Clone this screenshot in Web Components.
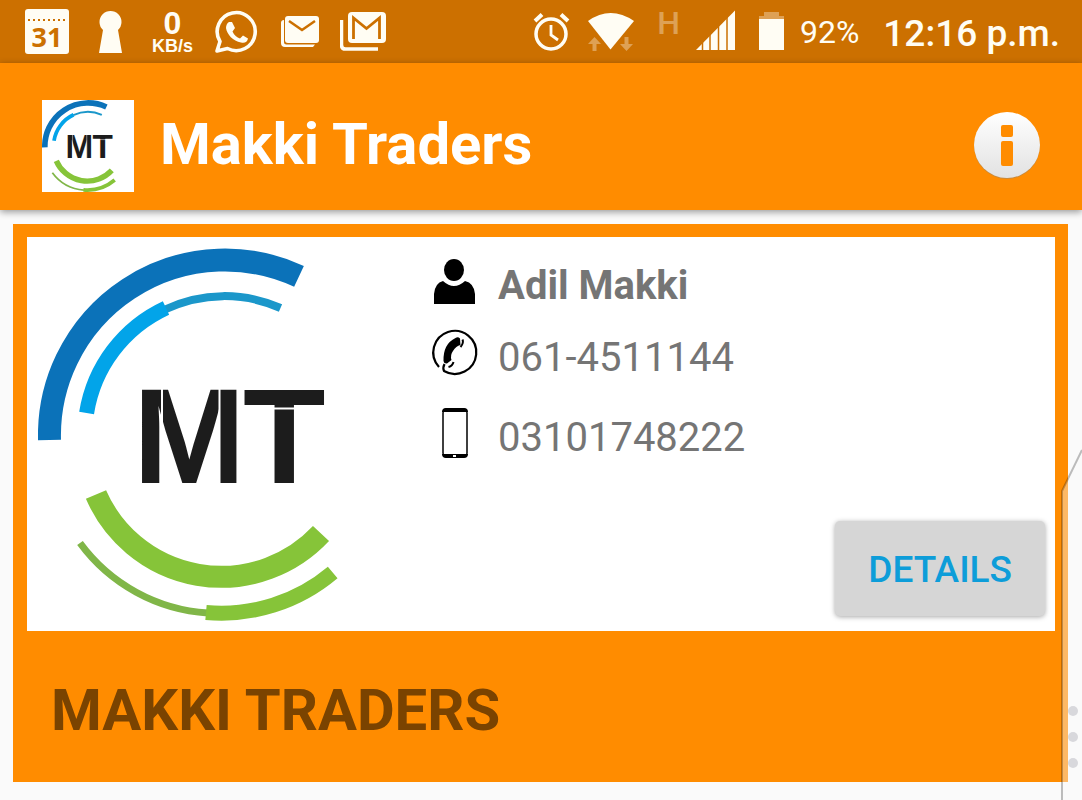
<!DOCTYPE html>
<html lang="en">
<head>
<meta charset="UTF-8">
<meta name="viewport" content="width=device-width, initial-scale=1.0">
<title>Makki Traders</title>
<style>
  body {
    margin: 0;
    min-height: 100vh;
    background-color: #fafafa;
    font-family: Roboto, "Liberation Sans", sans-serif;
    overflow: hidden;
  }
</style>
</head>
<body>

<status-bar battery="92%" hora="12:16 p.m."></status-bar>
<app-header>Makki Traders</app-header>
<main>
  <trader-card>
    <contact-row icon="person"><strong>Adil Makki</strong></contact-row>
    <contact-row icon="phone">061-4511144</contact-row>
    <contact-row icon="mobile" class="last">03101748222</contact-row>
    <span slot="caption">MAKKI TRADERS</span>
  </trader-card>
</main>
<edge-handle></edge-handle>

<script>
// Company logo, shared by the header and the card
class MtLogo extends HTMLElement {
  connectedCallback() {
    const shadowRoot = this.attachShadow({ mode: 'open' });
    shadowRoot.innerHTML = `
    <style>
      :host {
        display: block;
        background-color: white;
      }

      svg {
        display: block;
        width: 100%;
        height: auto;
      }

      text {
        font: bold 135px "Liberation Sans", Arial, sans-serif;
        fill: #1c1c1c;
      }
    </style>
    <svg viewBox="0 0 373 373" fill="none" role="img" aria-label="MT logo">
      <path d="M11.5 192A175.5 175.5 0 0 1 261 28.4" stroke="#0b72b9" stroke-width="23"/>
      <path d="M127 61.5A138.5 138.5 0 0 1 242.5 60" stroke="#1b97ca" stroke-width="8"/>
      <path d="M48.6 165A140 140 0 0 1 128 60" stroke="#02a4e9" stroke-width="15"/>
      <path d="M58 246.5A136.5 136.5 0 0 0 283 285.5" stroke="#86c439" stroke-width="22"/>
      <path d="M42 295A172.5 172.5 0 0 0 170 365" stroke="#80b648" stroke-width="7"/>
      <path d="M168 364.5A172.5 172.5 0 0 0 294.7 324.5" stroke="#86c439" stroke-width="15"/>
      <text x="95" y="235">M</text>
      <text x="205" y="235">T</text>
      <path d="M124 140V237M181.5 140V237M206 160.5H290" stroke="white" stroke-width="2"/>
    </svg>
    `;
  }
}

customElements.define('mt-logo', MtLogo);

class StatusBar extends HTMLElement {
  connectedCallback() {
    const battery = this.getAttribute('battery') || '';
    const hora = this.getAttribute('hora') || '';

    const shadowRoot = this.attachShadow({ mode: 'open' });
    shadowRoot.innerHTML = `
    <style>
      :host {
        display: flex;
        justify-content: space-between;
        align-items: center;
        box-sizing: border-box;
        height: 63px;
        padding: 0 22px 0 24px;
        background-color: #cc7000;
        color: #fffdf4;
        white-space: nowrap;
      }

      .group {
        display: flex;
        align-items: center;
      }

      .left {
        gap: 20px;
      }

      .right {
        gap: 16px;
      }

      svg {
        display: block;
        flex: none;
        height: 63px;
        fill: #fffdf4;
      }

      .speed {
        width: 45px;
        text-align: center;
        font: bold 18px/18px "Liberation Sans", Arial, sans-serif;
      }

      .speed b {
        display: block;
        font-size: 32px;
        line-height: 28px;
      }

      .network {
        width: 28px;
        height: 44px;
        text-align: right;
        font-size: 32px;
        line-height: 26px;
        font-weight: 500;
        opacity: 0.35;
      }

      .battery {
        font-size: 32px;
        line-height: 40px;
        padding-right: 8px;
      }

      .hora {
        font-size: 37px;
        line-height: 40px;
        font-weight: 500;
        padding-top: 4px;
      }
    </style>

    <div class="group left">
      <svg width="46" viewBox="24 0 46 63">
        <rect x="25" y="9" width="44" height="45" rx="3"/>
        <path d="M28 20H67" stroke="#cc7000" stroke-width="2" stroke-dasharray="2 3"/>
        <text x="47" y="47" text-anchor="middle" font-family="Open Sans, sans-serif" font-weight="bold" font-size="27" fill="#cc7000">31</text>
      </svg>
      <svg width="40" viewBox="90 0 40 63">
        <path d="M99 53L103 30A11 11 0 1 1 118 30L122 53Z"/>
      </svg>
      <div class="speed"><b>0</b>KB/s</div>
      <svg width="44" viewBox="215 0 44 63">
        <path d="M217 51L220 41.5A19 19 0 1 1 227.5 48.5Z" fill="none" stroke="#fffdf4" stroke-width="3.6" stroke-linejoin="round"/>
        <path d="M229 22L232 22L235 28L232.5 31.5C234 35 237 37.5 240 38.5L243 35.5L248 38.5C247.5 42 244.5 43.5 241 42.5C233 41 227 34.5 226 28C226 25.5 227 23 229 22Z"/>
      </svg>
      <svg width="41" viewBox="279 0 41 63">
        <rect x="285" y="16" width="34" height="27" rx="3"/>
        <path d="M289 21L302 30L315 21" fill="none" stroke="#cc7000" stroke-width="2.5"/>
        <path d="M284 20V42Q284 44.5 286.5 44.5H315L313 47H285Q281 47 281 43V23Q281 20 284 20Z"/>
      </svg>
      <svg width="46" viewBox="340 0 46 63">
        <rect x="348" y="12" width="38" height="31" rx="4"/>
        <path d="M353.5 39V18L366.5 28.5L379.5 18V39" fill="none" stroke="#cc7000" stroke-width="2.8"/>
        <path d="M341.5 20V45Q341.5 49 345.5 49H378" fill="none" stroke="#fffdf4" stroke-width="3.5"/>
      </svg>
    </div>

    <div class="group right">
      <svg width="39" viewBox="534 0 39 63">
        <circle cx="552" cy="34" r="15" fill="none" stroke="#fffdf4" stroke-width="3.5"/>
        <path d="M552 25V35L559 40" fill="none" stroke="#fffdf4" stroke-width="2.8"/>
        <path d="M536 21L543 14.5M569 21L562 14.5" stroke="#fffdf4" stroke-width="4"/>
      </svg>
      <svg width="48" viewBox="589 0 48 63">
        <path d="M593.5 51V44H589L595.5 37L602 44H597.5V51ZM625.5 37V44H621L627.5 51L634 44H629.5V37Z" opacity="0.35"/>
        <path d="M589 21Q611.500 5 635 21L611.5 49.5Z"/>
      </svg>
      <span class="network">H</span>
      <svg width="46" viewBox="697 0 46 63">
        <path d="M697 50L736 10.500V50Z"/>
        <path d="M703.5 10V51M711 10V51M719.5 10V51M728 10V51" stroke="#cc7000" stroke-width="1.5"/>
      </svg>
      <svg width="26" viewBox="759 0 26 63">
        <path d="M765 12H780V16H785V19H760V16H765Z" opacity="0.35"/>
        <rect x="760" y="19" width="25" height="31"/>
      </svg>
      <span class="battery">${battery}</span>
      <span class="hora">${hora}</span>
    </div>
    `;
  }
}

customElements.define('status-bar', StatusBar);

class AppHeader extends HTMLElement {
  connectedCallback() {
    const shadowRoot = this.attachShadow({ mode: 'open' });
    shadowRoot.innerHTML = `
    <style>
      :host {
        display: block;
        position: relative;
        background-color: #ff8c00;
        box-shadow: 0 2px 7px rgba(0, 0, 0, 0.4);
      }

      header {
        display: flex;
        align-items: center;
        padding: 37px 42px 18px;
      }

      mt-logo {
        width: 92px;
        flex: none;
      }

      h1 {
        flex: 1;
        margin: 0;
        padding: 0 26px 4px;
        color: white;
        font-size: 58px;
        line-height: 64px;
        font-weight: bold;
      }

      button {
        border: none;
        padding: 0;
        background: none;
        cursor: pointer;
      }

      button svg {
        display: block;
      }
    </style>

    <header>
      <mt-logo></mt-logo>
      <h1><slot></slot></h1>
      <button type="button" aria-label="Info">
        <svg width="66" height="68" viewBox="0 0 66 68">
          <defs>
            <linearGradient id="disc" x1="0" y1="0" x2="0" y2="1">
              <stop offset="0" stop-color="#ffffff"/>
              <stop offset="1" stop-color="#e2e2e2"/>
            </linearGradient>
          </defs>
          <circle cx="33" cy="34" r="33" fill="#c98a3c"/>
          <circle cx="33" cy="33" r="33" fill="url(#disc)"/>
          <rect x="27" y="13" width="12" height="12" rx="2" fill="#ff8c00"/>
          <rect x="27" y="29" width="12" height="25" rx="2" fill="#ff8c00"/>
        </svg>
      </button>
    </header>
    `;
  }
}

customElements.define('app-header', AppHeader);

const contactIcons = {
  person: `
    <ellipse cx="22" cy="11" rx="10" ry="11"/>
    <path d="M2 45V35Q3 24 11 22Q22 32 33 22Q42 24 43 35V45Z"/>`,
  phone: `
    <path d="M7 36A21.500 21.500 0 1 1 12 40Q10.500 37 12.500 33" fill="none" stroke="black" stroke-width="2.2"/>
    <path d="M23.500 7Q26 5.500 28 7.500L28.500 14Q24 15 21 20Q18 24 19.500 29L15 32.500Q12 33 11.500 30Q11 13 23.500 7Z"/>
    <path d="M30.500 8.500Q32 12 28.500 16M21.500 31Q20.500 35 16.500 36" fill="none" stroke="black" stroke-width="2"/>`,
  mobile: `
    <rect x="11" y="-2" width="24" height="48" rx="4" fill="none" stroke="black" stroke-width="1.5"/>
    <path d="M10 1Q10 -3 14 -3H32Q36 -3 36 1ZM10 43H36Q36 47 32 47H14Q10 47 10 43Z"/>
    <rect x="21" y="44" width="3" height="2" fill="white"/>`
};

class ContactRow extends HTMLElement {
  connectedCallback() {
    const icon = contactIcons[this.getAttribute('icon')] || '';

    const shadowRoot = this.attachShadow({ mode: 'open' });
    shadowRoot.innerHTML = `
    <style>
      :host {
        display: flex;
        align-items: center;
        gap: 21px;
        height: 72px;
        color: #757575;
        font-size: 40px;
        line-height: 48px;
      }

      :host(.last) {
        height: 88px;
      }

      svg {
        flex: none;
        margin-bottom: 6px;
        overflow: visible;
      }

      span {
        padding-top: 3px;
      }
    </style>
    <svg width="45" height="45" viewBox="0 0 45 45" aria-hidden="true">${icon}</svg>
    <span><slot></slot></span>
    `;
  }
}

customElements.define('contact-row', ContactRow);

class TraderCard extends HTMLElement {
  connectedCallback() {
    const shadowRoot = this.attachShadow({ mode: 'open' });
    shadowRoot.innerHTML = `
    <style>
      :host {
        display: block;
        margin: 14px 14px 0 13px;
        padding: 13px 13px 0 14px;
        background-color: #ff8c00;
      }

      .body {
        display: flex;
        gap: 21px;
        padding: 11px 10px 10px 11px;
        background-color: white;
      }

      mt-logo {
        width: 373px;
        min-width: 0;
      }

      .details {
        display: flex;
        flex-direction: column;
        flex: 1;
      }

      button {
        align-self: flex-end;
        margin: auto 0 5px;
        padding: 25px 33px 22px;
        border: none;
        border-radius: 5px;
        background-color: #d6d6d6;
        box-shadow: 0 1px 5px rgba(0, 0, 0, 0.35);
        color: #0d9dd9;
        font-family: inherit;
        font-size: 37px;
        line-height: 48px;
        font-weight: 500;
        cursor: pointer;
      }

      h2 {
        margin: 0;
        padding: 47px 24px 40px;
        color: #7a4300;
        font-size: 58px;
        line-height: 64px;
        font-weight: bold;
      }
    </style>

    <div class="body">
      <mt-logo></mt-logo>
      <div class="details">
        <slot></slot>
        <button type="button">DETAILS</button>
      </div>
    </div>
    <h2><slot name="caption"></slot></h2>
    `;
  }
}

customElements.define('trader-card', TraderCard);

// Side panel handle that floats over the right edge of the screen
class EdgeHandle extends HTMLElement {
  connectedCallback() {
    const shadowRoot = this.attachShadow({ mode: 'open' });
    shadowRoot.innerHTML = `
    <style>
      :host {
        display: block;
        position: fixed;
        right: 0;
        bottom: 0;
        pointer-events: none;
      }

      svg {
        display: block;
      }
    </style>
    <svg width="21" height="352" viewBox="0 0 21 352" aria-hidden="true">
      <path d="M21 2L1 43V352H21Z" fill="#fafafa" opacity="0.4"/>
      <path d="M21 2L1 43V354" fill="none" stroke="black" stroke-opacity="0.25" stroke-width="2"/>
      <g fill="#d8d8dc">
        <circle cx="12" cy="263" r="5"/>
        <circle cx="12" cy="289" r="5"/>
        <circle cx="12" cy="315" r="5"/>
      </g>
    </svg>
    `;
  }
}

customElements.define('edge-handle', EdgeHandle);
</script>
</body>
</html>
